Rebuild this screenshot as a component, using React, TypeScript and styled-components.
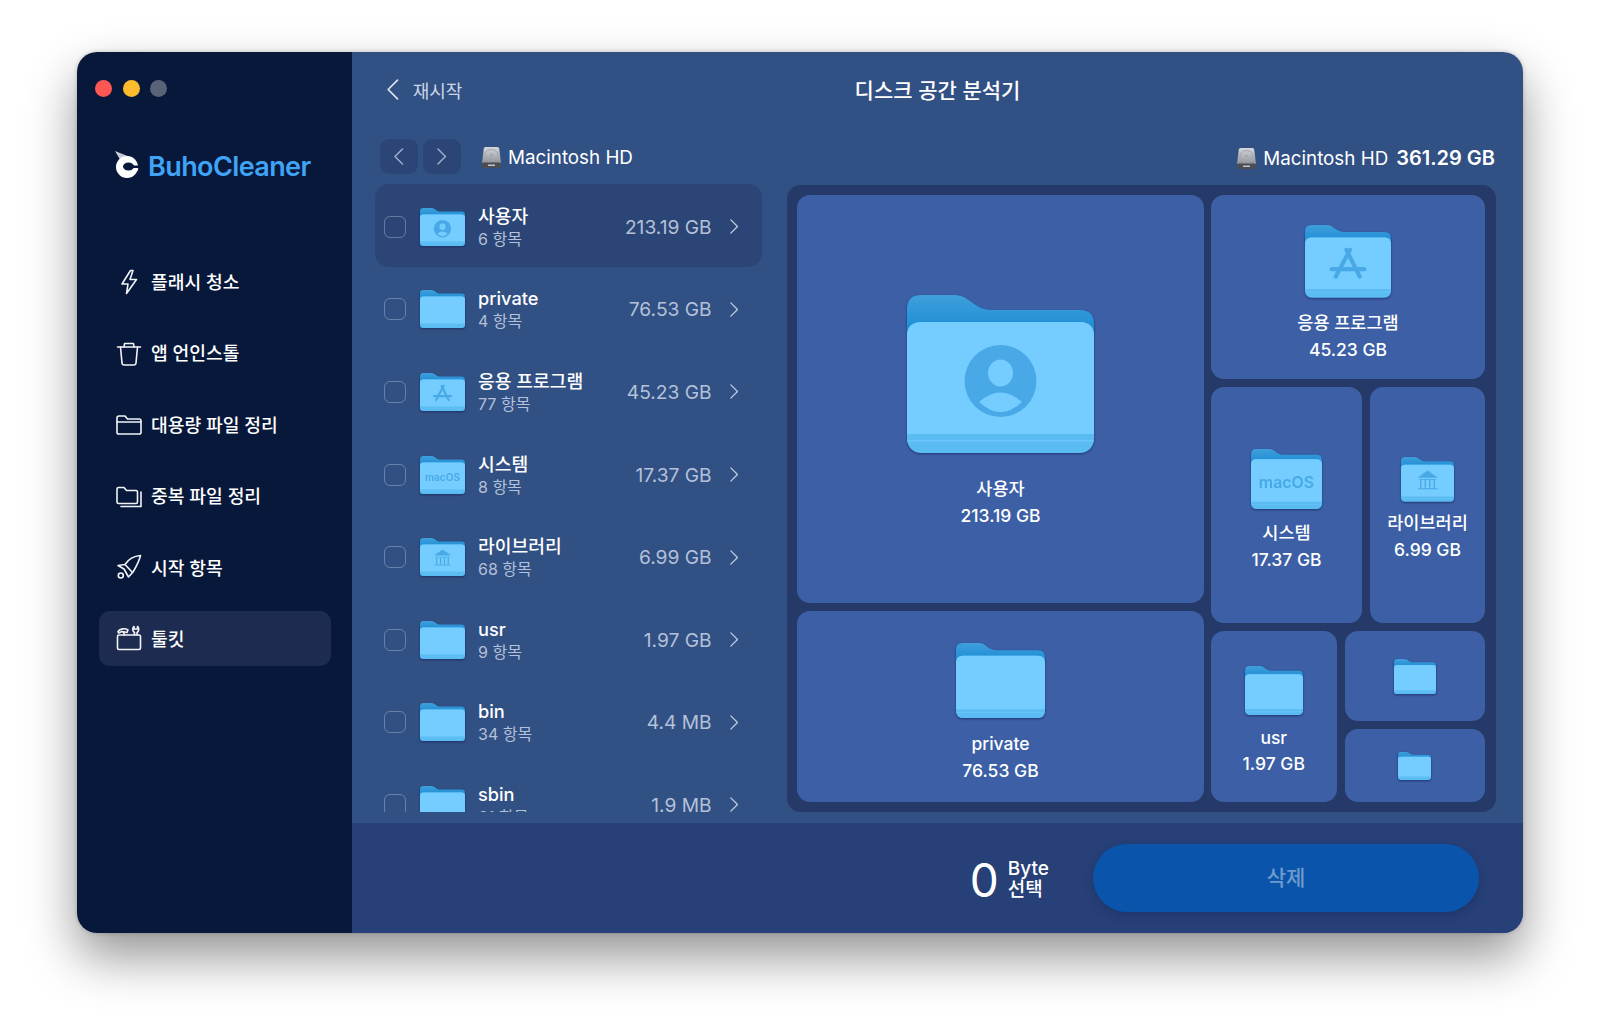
import React, { useId } from 'react';
import styled, { createGlobalStyle } from 'styled-components';

const GlobalStyle = createGlobalStyle`
  html, body {
    margin: 0;
    padding: 0;
    background: #fff;
  }
  body {
    font-family: Inter, "Noto Sans CJK KR", sans-serif;
    -webkit-font-smoothing: antialiased;
  }
`;

const Page = styled.div`
  width: 1600px;
  height: 1035px;
  overflow: hidden;
  padding: 52px 77px 0;
  box-sizing: border-box;
`;

const Window = styled.div`
  display: flex;
  width: 1446px;
  height: 881px;
  border-radius: 20px;
  overflow: hidden;
  box-shadow: 0 24px 50px rgba(0, 0, 0, 0.42), 0 0 4px rgba(0, 0, 0, 0.2);
`;

const Sidebar = styled.aside`
  width: 275px;
  flex: none;
  box-sizing: border-box;
  padding: 27.5px 0 0 18px;
  background: #07183a;
`;

const TrafficLights = styled.div`
  display: flex;
  gap: 10.5px;
`;

const Light = styled.span<{ $color: string }>`
  width: 17px;
  height: 17px;
  border-radius: 50%;
  background: ${({ $color }) => $color};
`;

const Logo = styled.div`
  display: flex;
  align-items: center;
  gap: 9px;
  height: 28px;
  margin: 54px 0 0 20px;
  color: #3fa4f5;
  font-size: 27px;
  font-weight: 600;
  letter-spacing: -0.6px;
`;

const LogoName = styled.span`
  padding-top: 3px;
`;

const Nav = styled.nav`
  display: flex;
  flex-direction: column;
  gap: 16.4px;
  width: 232px;
  margin: 75.5px 0 0 4px;
`;

const NavItem = styled.div<{ $active?: boolean }>`
  display: flex;
  align-items: center;
  gap: 9px;
  height: 55px;
  padding-left: 17px;
  border-radius: 11px;
  color: #fff;
  font-size: 18.2px;
  font-weight: 500;
  background: ${({ $active }) => ($active ? '#1d2b50' : 'transparent')};
`;

const NavLabel = styled.span`
  padding-bottom: 1px;
`;

const NavIcon = styled.svg`
  width: 26px;
  height: 26px;
  flex: none;
  fill: none;
  stroke: #f2f4f8;
  stroke-width: 1.6;
  stroke-linecap: round;
  stroke-linejoin: round;
`;

const Main = styled.main`
  flex: 1;
  min-width: 0;
  display: flex;
  flex-direction: column;
  background: #315084;
`;

const Header = styled.header`
  display: grid;
  grid-template-columns: 1fr auto 1fr;
  align-items: center;
  height: 74px;
  padding: 0 35px;
  margin-bottom: 2px;
  color: #fff;
`;

const BackLink = styled.div`
  display: flex;
  align-items: center;
  gap: 14px;
  padding-top: 1px;
  color: #cdd6e6;
  font-size: 18px;
`;

const Title = styled.h1`
  margin: 0;
  font-size: 21px;
  font-weight: 500;
`;

const Toolbar = styled.div`
  display: flex;
  align-items: center;
  height: 35px;
  padding: 11px 28px 10px 28px;
  color: #fff;
  font-size: 18.8px;
`;

const NavButton = styled.button`
  display: flex;
  align-items: center;
  justify-content: center;
  width: 38px;
  height: 35px;
  margin-right: 5px;
  padding: 0;
  border: none;
  border-radius: 9px;
  background: #2b4676;
`;

const DiskLabel = styled.div<{ $right?: boolean }>`
  display: flex;
  align-items: center;
  gap: 6px;
  margin-left: ${({ $right }) => ($right ? 'auto' : '15px')};
  padding-top: ${({ $right }) => ($right ? '3px' : '1px')};
`;

const DiskTotal = styled.strong`
  margin-left: 2px;
  font-size: 20px;
  font-weight: 600;
`;

const Content = styled.div`
  display: flex;
  gap: 25px;
  height: 628px;
  padding: 0 27px 0 23px;
`;

const List = styled.div`
  width: 387px;
  flex: none;
  overflow: hidden;
`;

const Row = styled.div<{ $selected?: boolean }>`
  display: flex;
  align-items: center;
  height: 82.6px;
  padding: 3px 24px 0 9px;
  box-sizing: border-box;
  border-radius: 14px;
  background: ${({ $selected }) => ($selected ? '#2b4676' : 'transparent')};
`;

const Checkbox = styled.span`
  width: 22px;
  height: 22px;
  flex: none;
  box-sizing: border-box;
  margin-right: 14px;
  border: 1.5px solid rgba(255, 255, 255, 0.28);
  border-radius: 6px;
`;

const RowText = styled.div`
  margin-left: 13px;
`;

const RowName = styled.div`
  color: #fff;
  font-size: 18.2px;
  font-weight: 500;
  line-height: 24px;
`;

const RowCount = styled.div`
  color: #b4c1d8;
  font-size: 16px;
  line-height: 22px;
`;

const RowSize = styled.div`
  margin-left: auto;
  margin-right: 18px;
  color: #b4c1d8;
  font-size: 19.2px;
`;

const TreeMap = styled.div`
  flex: 1;
  display: flex;
  gap: 7px;
  box-sizing: border-box;
  height: 627px;
  margin-top: 1px;
  padding: 10px 11px 10px 10px;
  border-radius: 14px;
  background: #253a69;
`;

const TreeGroup = styled.div<{ $dir: 'row' | 'column'; $flex: string }>`
  display: flex;
  flex-direction: ${({ $dir }) => $dir};
  flex: ${({ $flex }) => $flex};
  gap: 8px;
  min-width: 0;
  min-height: 0;
`;

const Tile = styled.div<{ $flex: string }>`
  flex: ${({ $flex }) => $flex};
  display: flex;
  flex-direction: column;
  align-items: center;
  justify-content: center;
  min-width: 0;
  min-height: 0;
  border-radius: 13px;
  background: #3c5fa6;
  color: #fff;
  font-size: 17.5px;
  font-weight: 500;
  line-height: 26.5px;
  text-align: center;
`;

const TileFolder = styled.div<{ $width: number }>`
  display: flex;
  margin-top: ${({ $width }) => 4 + $width * 0.12}px;
  margin-bottom: ${({ $width }) => 3 + $width * 0.11}px;
`;

const FolderSvg = styled.svg`
  display: block;
  flex: none;
  filter: drop-shadow(0 1px 1px rgba(22, 36, 90, 0.7));
`;

const BottomBar = styled.footer`
  flex: 1;
  display: flex;
  align-items: center;
  justify-content: flex-end;
  margin-top: 11px;
  padding-right: 44px;
  background: #274077;
  color: #fff;
`;

const Zero = styled.div`
  margin-right: 9px;
  padding-top: 3px;
  font-size: 46px;
  font-weight: 400;
  line-height: 1;
`;

const Unit = styled.div`
  margin-right: 44px;
  padding-top: 2px;
  font-size: 19px;
  font-weight: 500;
  line-height: 21px;
`;

const DeleteButton = styled.button`
  width: 386px;
  height: 68px;
  padding: 0 0 4px;
  border: none;
  border-radius: 34px;
  background: #0a55ab;
  box-shadow: 0 4px 10px rgba(16, 32, 80, 0.3);
  color: rgba(255, 255, 255, 0.42);
  font-family: inherit;
  font-size: 21px;
  font-weight: 500;
`;

type Badge = 'user' | 'apps' | 'macos' | 'library';

const BADGE = '#48a9e6';

function Folder({ width, badge }: { width: number; badge?: Badge }) {
  const id = useId().replace(/[^a-zA-Z0-9]/g, '');
  return (
    <FolderSvg width={width} height={(width * 158) / 187} viewBox="0 0 187 158">
      <defs>
        <linearGradient id={`back${id}`} x1="0" y1="0" x2="0" y2="1">
          <stop offset="0" stopColor="#3f9fdb" />
          <stop offset="1" stopColor="#0681d2" />
        </linearGradient>
      </defs>
      <path
        d="M0 60V14Q0 0 14 0H48C62 0 68 15 84 15H173Q187 15 187 29V60Z"
        fill={`url(#back${id})`}
      />
      <rect y="27" width="187" height="131" rx="14" fill="#5bbcf3" />
      <path d="M0 139V41Q0 27 14 27H173Q187 27 187 41V139Z" fill="#74ccff" />
      <rect y="145" width="187" height="1.5" fill="#74ccff" opacity="0.6" />
      {badge === 'user' && (
        <g>
          <circle cx="93.5" cy="86" r="36" fill={BADGE} />
          <ellipse cx="93.5" cy="78" rx="12.5" ry="13.5" fill="#74ccff" />
          <path d="M72 107Q93.5 88 115 107Q93.5 127 72 107Z" fill="#74ccff" />
        </g>
      )}
      {badge === 'apps' && (
        <g stroke={BADGE} strokeWidth="9" strokeLinecap="round" fill="none">
          <path d="M90 54L119 112" />
          <path d="M98 54L67 112" />
          <path d="M58 96H129" />
        </g>
      )}
      {badge === 'macos' && (
        <text
          x="93.5"
          y="103"
          textAnchor="middle"
          fill={BADGE}
          fontFamily="Inter, sans-serif"
          fontWeight="600"
          fontSize="42"
        >
          macOS
        </text>
      )}
      {badge === 'library' && (
        <g fill={BADGE}>
          <path d="M58 73L94 48L130 73Z" />
          <rect x="64" y="78" width="60" height="3" />
          <rect x="67" y="81" width="5" height="27" />
          <rect x="83" y="81" width="5" height="27" />
          <rect x="99" y="81" width="5" height="27" />
          <rect x="115" y="81" width="5" height="27" />
          <rect x="60" y="110" width="68" height="4" />
        </g>
      )}
    </FolderSvg>
  );
}

function Chevron({ left, size = 18, color = '#c4cfe2' }: { left?: boolean; size?: number; color?: string }) {
  return (
    <svg width={(size * 5) / 9} height={size} viewBox="0 0 10 18" fill="none" style={{ flex: 'none' }}>
      <path
        d={left ? 'M9 1L1 9L9 17' : 'M1 1L9 9L1 17'}
        stroke={color}
        strokeWidth="1.5"
        strokeLinecap="round"
        strokeLinejoin="round"
      />
    </svg>
  );
}

function DiskIcon() {
  return (
    <svg width="21" height="23" viewBox="0 0 21 23" style={{ flex: 'none' }}>
      <defs>
        <linearGradient id="diskFace" x1="0" y1="0" x2="0" y2="1">
          <stop offset="0" stopColor="#d5d7db" />
          <stop offset="1" stopColor="#8f9399" />
        </linearGradient>
      </defs>
      <path d="M4.5 1H16.5Q18 1 18.2 2.5L20 17H1L2.8 2.5Q3 1 4.5 1Z" fill="url(#diskFace)" />
      <ellipse cx="10.5" cy="9" rx="6.5" ry="5.5" fill="none" stroke="#a3a6ac" strokeWidth="1" />
      <circle cx="10.5" cy="9" r="1.5" fill="#a3a6ac" />
      <rect x="1" y="16.5" width="19" height="5.5" rx="1.5" fill="#4a4d54" />
      <rect x="7" y="18.5" width="7" height="1.5" fill="#c2c4c8" />
    </svg>
  );
}

function BuhoLogo() {
  return (
    <svg width="24" height="28" viewBox="0 0 24 28" style={{ flex: 'none' }}>
      <path d="M0 0L15 6Q7 5.5 5 8.5Z" fill="#c5ccd8" />
      <circle cx="12" cy="16" r="11" fill="#fff" />
      <ellipse cx="13.5" cy="15.5" rx="5.5" ry="4" fill="#07183a" />
      <path d="M17 14.5L24 14.5L24 17L17 17Z" fill="#07183a" />
      <path d="M19 19Q21 18 23.5 17.5Q23 19 22 20.5Z" fill="#fff" />
    </svg>
  );
}

const navItems = [
  {
    label: '플래시 청소',
    icon: <path d="M14.5 1.5L6 15H12L10.5 24.5L20.5 10.5H14L17 1.5Z" />,
  },
  {
    label: '앱 언인스톨',
    icon: (
      <>
        <path d="M1.5 7H24.5" />
        <path d="M8 7L8.5 3.5H17.5L18 7" />
        <path d="M4.5 7L6 23Q6.2 25 8.2 25H17.8Q19.8 25 20 23L21.5 7" />
      </>
    ),
  },
  {
    label: '대용량 파일 정리',
    icon: (
      <>
        <path d="M1 21.5V7Q1 5 3 5H9L11.5 8H23Q25 8 25 10V21.5Q25 23 23 23H3Q1 23 1 21.5Z" />
        <path d="M1 11H25" />
      </>
    ),
  },
  {
    label: '중복 파일 정리',
    icon: (
      <>
        <path d="M1 19V6Q1 4.5 2.5 4.5H8L10.5 7.5H20Q21.5 7.5 21.5 9V19Q21.5 20.5 20 20.5H2.5Q1 20.5 1 19Z" />
        <path d="M25 9V23.5H5" />
      </>
    ),
  },
  {
    label: '시작 항목',
    icon: (
      <>
        <path d="M24.5 1.5C18 2 12.5 5 9 10.5L2 11.5L8 15L12.5 23L17 18C20 13 23 8 24.5 1.5Z" />
        <path d="M9 10.5L16 18" />
        <circle cx="4.8" cy="21.5" r="2.5" />
      </>
    ),
  },
  {
    label: '툴킷',
    icon: (
      <>
        <path d="M3 10H23Q24.5 10 24.5 11.5V23Q24.5 24.5 23 24.5H3Q1.5 24.5 1.5 23V11.5Q1.5 10 3 10Z" />
        <path d="M2 6.5C4 3.5 9 3 12 5L11 7.5L6 6.5L2.5 8Z" />
        <path d="M7.5 7L8.5 10" />
        <path d="M18.5 10V7.5C16.5 6.5 16 3 18 1.5V4H21.5V1.5C23.5 3 23 6.5 21 7.5V10" />
      </>
    ),
  },
];

const rows: { name: string; count: string; size: string; badge?: Badge }[] = [
  { name: '사용자', count: '6 항목', size: '213.19 GB', badge: 'user' },
  { name: 'private', count: '4 항목', size: '76.53 GB' },
  { name: '응용 프로그램', count: '77 항목', size: '45.23 GB', badge: 'apps' },
  { name: '시스템', count: '8 항목', size: '17.37 GB', badge: 'macos' },
  { name: '라이브러리', count: '68 항목', size: '6.99 GB', badge: 'library' },
  { name: 'usr', count: '9 항목', size: '1.97 GB' },
  { name: 'bin', count: '34 항목', size: '4.4 MB' },
  { name: 'sbin', count: '61 항목', size: '1.9 MB' },
];

function FolderTile({
  flex,
  width,
  badge,
  name,
  size,
}: {
  flex: string;
  width: number;
  badge?: Badge;
  name?: string;
  size?: string;
}) {
  return (
    <Tile $flex={flex}>
      <TileFolder $width={width}>
        <Folder width={width} badge={badge} />
      </TileFolder>
      {name && <div>{name}</div>}
      {size && <div>{size}</div>}
    </Tile>
  );
}

export default function App() {
  return (
    <Page>
      <GlobalStyle />
      <Window>
        <Sidebar>
          <TrafficLights>
            <Light $color="#fc5753" />
            <Light $color="#fdbc2e" />
            <Light $color="#5a6278" />
          </TrafficLights>
          <Logo>
            <BuhoLogo />
            <LogoName>BuhoCleaner</LogoName>
          </Logo>
          <Nav>
            {navItems.map((item, i) => (
              <NavItem key={item.label} $active={i === navItems.length - 1}>
                <NavIcon viewBox="0 0 26 26">{item.icon}</NavIcon>
                <NavLabel>{item.label}</NavLabel>
              </NavItem>
            ))}
          </Nav>
        </Sidebar>
        <Main>
          <Header>
            <BackLink>
              <Chevron left size={21} color="#dbe2ee" />
              재시작
            </BackLink>
            <Title>디스크 공간 분석기</Title>
            <span />
          </Header>
          <Toolbar>
            <NavButton>
              <Chevron left size={17} color="#9fb0cc" />
            </NavButton>
            <NavButton>
              <Chevron size={17} color="#9fb0cc" />
            </NavButton>
            <DiskLabel>
              <DiskIcon />
              Macintosh HD
            </DiskLabel>
            <DiskLabel $right>
              <DiskIcon />
              Macintosh HD
              <DiskTotal>361.29 GB</DiskTotal>
            </DiskLabel>
          </Toolbar>
          <Content>
            <List>
              {rows.map((row, i) => (
                <Row key={row.name} $selected={i === 0}>
                  <Checkbox />
                  <Folder width={45} badge={row.badge} />
                  <RowText>
                    <RowName>{row.name}</RowName>
                    <RowCount>{row.count}</RowCount>
                  </RowText>
                  <RowSize>{row.size}</RowSize>
                  <Chevron size={15} />
                </Row>
              ))}
            </List>
            <TreeMap>
              <TreeGroup $dir="column" $flex="0 0 407px">
                <FolderTile flex="407 1 0" width={187} badge="user" name="사용자" size="213.19 GB" />
                <FolderTile flex="191 1 0" width={89} name="private" size="76.53 GB" />
              </TreeGroup>
              <TreeGroup $dir="column" $flex="1 1 0">
                <FolderTile flex="184 1 0" width={86} badge="apps" name="응용 프로그램" size="45.23 GB" />
                <TreeGroup $dir="row" $flex="236 1 0">
                  <FolderTile flex="151 1 0" width={71} badge="macos" name="시스템" size="17.37 GB" />
                  <FolderTile flex="115 1 0" width={53} badge="library" name="라이브러리" size="6.99 GB" />
                </TreeGroup>
                <TreeGroup $dir="row" $flex="171 1 0">
                  <FolderTile flex="126 1 0" width={58} name="usr" size="1.97 GB" />
                  <TreeGroup $dir="column" $flex="141 1 0">
                    <FolderTile flex="89 1 0" width={42} />
                    <FolderTile flex="73 1 0" width={33} />
                  </TreeGroup>
                </TreeGroup>
              </TreeGroup>
            </TreeMap>
          </Content>
          <BottomBar>
            <Zero>0</Zero>
            <Unit>
              Byte
              <br />
              선택
            </Unit>
            <DeleteButton>삭제</DeleteButton>
          </BottomBar>
        </Main>
      </Window>
    </Page>
  );
}
